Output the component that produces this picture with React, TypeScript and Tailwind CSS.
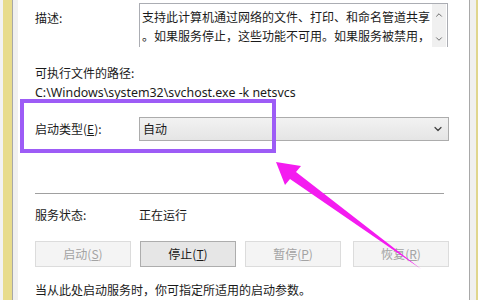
import React from "react";
import { ChevronUp, ChevronDown } from "lucide-react";

const cjk = { fontFamily: '"Noto Sans CJK SC", "Noto Sans", sans-serif' };

function Btn({ label, k, disabled, cls }: { label: string; k: string; disabled?: boolean; cls: string }) {
  return (
    <div
      className={
        "h-[26px] w-[96px] flex items-center justify-center text-[12px] leading-none border " +
        (disabled
          ? "bg-[#f4f4f4] border-[#dcdcdc] text-[#a3a3a3] "
          : "bg-[#e6e6e6] border-[#adadad] text-[#1a1a1a] ") +
        cls
      }
    >
      <span>
        {label}(<span className="underline">{k}</span>)
      </span>
    </div>
  );
}

export default function App() {
  return (
    <div className="relative w-[480px] h-[300px] overflow-hidden bg-white flex text-[#1a1a1a]" style={cjk}>
      {/* left frame */}
      <div className="flex h-full shrink-0">
        <div className="w-[3px] bg-[#f3f3f3]" />
        <div className="w-[9px] bg-[#e8dc8c]" />
        <div className="w-px bg-[#a8a8a8]" />
        <div className="w-[5px] bg-[#f0f0f0]" />
      </div>

      {/* content */}
      <div className="w-[451px] shrink-0 flex flex-col pl-[17px]">
        {/* description */}
        <div className="flex mt-[3px]">
          <div className="w-[104px] pt-[7px] text-[12px] leading-[16px]">描述:</div>
          <div className="w-[309px] h-[44px] border-t border-l border-r border-[#abadb3] flex">
            <div className="flex-1 min-w-0 pl-[2px] pt-[3px] text-[12px] leading-[19px] text-[#1a1a1a] whitespace-nowrap">
              <div>支持此计算机通过网络的文件、打印、和命名管道共享</div>
              <div>。如果服务停止，这些功能不可用。如果服务被禁用，</div>
            </div>
            <div className="w-[14px] shrink-0 mr-[1px] bg-[#f0f0f0] flex flex-col items-center justify-between pt-[6px] pb-[3px] text-[#606060]">
              <ChevronUp size={10} strokeWidth={2.2} />
              <ChevronDown size={10} strokeWidth={2.2} />
            </div>
          </div>
        </div>

        {/* path */}
        <div className="mt-[18px] text-[12px] leading-[16px]">可执行文件的路径:</div>
        <div className="mt-[4px] text-[12.4px] leading-[16px]" style={{ fontFamily: '"Noto Sans", sans-serif' }}>
          C:\Windows\system32\svchost.exe -k netsvcs
        </div>

        {/* startup type */}
        <div className="flex items-center mt-[16px]">
          <div className="w-[104px] text-[12px] leading-[16px]">
            启动类型(<span className="underline">E</span>):
          </div>
          <div className="w-[310px] h-[24px] border border-[#acacac] bg-gradient-to-b from-[#f2f2f2] to-[#e5e5e5] flex items-center justify-between pl-[3px] pr-[4px]">
            <span className="text-[12px] leading-none">自动</span>
            <ChevronDown size={12} strokeWidth={2.4} className="text-[#404040]" />
          </div>
        </div>

        {/* separator */}
        <div className="mt-[52px] w-[409px] h-px bg-[#a0a0a0]" />

        {/* status */}
        <div className="flex mt-[13px] text-[12px] leading-[16px]">
          <div className="w-[104px]">服务状态:</div>
          <div>正在运行</div>
        </div>

        {/* buttons */}
        <div className="flex mt-[18px]">
          <Btn label="启动" k="S" disabled cls="" />
          <Btn label="停止" k="T" cls="ml-[9px]" />
          <Btn label="暂停" k="P" disabled cls="ml-[9px]" />
          <Btn label="恢复" k="R" disabled cls="ml-[12px]" />
        </div>

        {/* hint */}
        <div className="mt-[15px] text-[12px] leading-[16px] whitespace-nowrap">
          当从此处启动服务时，你可指定所适用的启动参数。
        </div>
      </div>

      {/* right frame */}
      <div className="flex h-full shrink-0">
        <div className="w-px bg-[#a8a8a8]" />
        <div className="w-[6px] bg-[#f0f0f0]" />
        <div className="w-[2px] bg-[#e0d68e]" />
        <div className="w-[2px] bg-white" />
      </div>

      {/* purple annotation box */}
      <div className="absolute left-[20px] top-[99px] w-[256px] h-[54px] border-[4px] border-[#9d5cf6]" />

      {/* magenta arrow */}
      <svg className="absolute left-0 top-0" width="480" height="300" viewBox="0 0 480 300">
        <polygon
          points="276,162 301,166 296,172 421,269 290,179 285,185"
          fill="#f41cf0"
        />
      </svg>
    </div>
  );
}
